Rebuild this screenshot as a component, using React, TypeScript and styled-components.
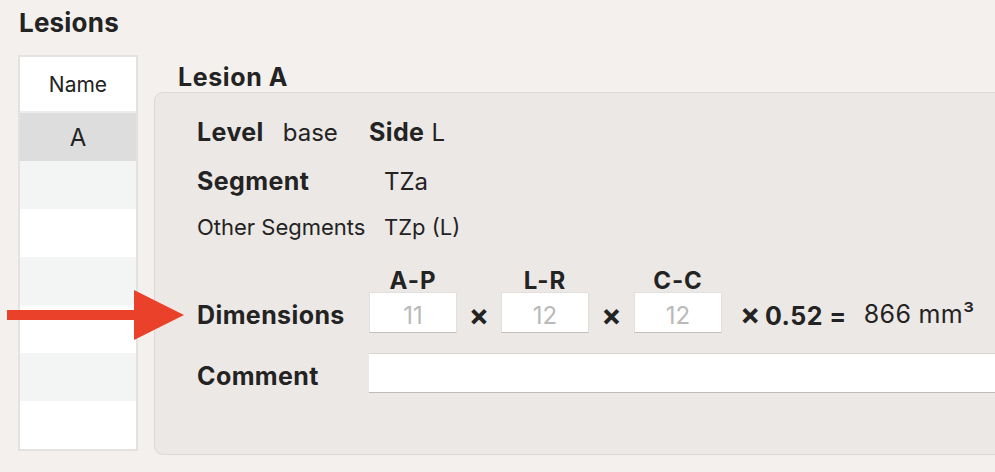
import React from "react";
import styled, { createGlobalStyle } from "styled-components";

const GlobalStyle = createGlobalStyle`
  html, body {
    margin: 0;
    padding: 0;
    background: #f4f0ed;
    overflow: hidden;
  }
  body {
    font-family: Inter, "Noto Sans", sans-serif;
    color: #232323;
  }
`;

const Page = styled.div`
  position: relative;
  width: 995px;
  height: 472px;
  overflow: hidden;
  padding: 7px 0 0 18px;
  box-sizing: border-box;
`;

const Title = styled.h1`
  margin: 0 0 16px 1px;
  font-size: 26px;
  line-height: 32px;
  font-weight: 700;
  letter-spacing: 0.2px;
`;

const Body = styled.div`
  display: flex;
  align-items: flex-start;
  gap: 16px;
`;

const List = styled.div`
  flex: none;
  width: 120px;
  border: 2px solid #e4e2e1;
  background: #fff;
  box-sizing: border-box;
`;

const ListHeader = styled.div`
  height: 54px;
  border-bottom: 2px solid #ececec;
  display: flex;
  align-items: center;
  justify-content: center;
  font-size: 21px;
`;

const ListRow = styled.div<{ $tone: "selected" | "stripe" | "plain" }>`
  height: 48px;
  display: flex;
  align-items: center;
  justify-content: center;
  font-size: 24px;
  background: ${(p) =>
    p.$tone === "selected" ? "#dddddd" : p.$tone === "stripe" ? "#f3f4f4" : "#ffffff"};
`;

const Detail = styled.div`
  flex: none;
  width: 860px;
`;

const SubTitle = styled.h2`
  margin: 7px 0 0 24px;
  font-size: 25px;
  line-height: 30px;
  font-weight: 700;
  letter-spacing: 0.6px;
`;

const Panel = styled.div`
  height: 363px;
  box-sizing: border-box;
  border: 1px solid #dcd8d4;
  border-radius: 9px;
  background: #ece8e5;
  padding: 19px 0 0 42px;
`;

const Field = styled.div<{ $h: number; $mt: number }>`
  display: grid;
  grid-template-columns: 172px 1fr;
  align-items: center;
  height: ${(p) => p.$h}px;
  margin-top: ${(p) => p.$mt}px;
`;

const Pair = styled.div<{ $gap: number }>`
  display: flex;
  align-items: baseline;
  gap: ${(p) => p.$gap}px;
`;

const Label = styled.span<{ $small?: boolean; $drop?: number }>`
  font-size: ${(p) => (p.$small ? 22 : 25)}px;
  font-weight: ${(p) => (p.$small ? 400 : 700)};
  letter-spacing: ${(p) => (p.$small ? 0 : 0.4)}px;
  padding-top: ${(p) => p.$drop ?? 0}px;
  white-space: nowrap;
`;

const Value = styled.span<{ $small?: boolean; $inset?: boolean }>`
  font-size: ${(p) => (p.$small ? 22 : 24)}px;
  padding-left: ${(p) => (p.$inset ? 15 : 0)}px;
  white-space: nowrap;
`;

const Dims = styled.div`
  display: flex;
  align-items: center;
`;

const AxisName = styled.span`
  width: 88px;
  text-align: center;
  font-size: 24px;
  font-weight: 700;
  letter-spacing: 1px;
`;

const Spacer = styled.span<{ $w: number }>`
  width: ${(p) => p.$w}px;
  text-align: center;
  font-size: 30px;
  font-weight: 700;
  padding-top: 5px;
`;

const NumBox = styled.input`
  width: 88px;
  height: 41px;
  box-sizing: border-box;
  border: 1px solid #e2dfdc;
  border-bottom-color: #c3c0bd;
  background: #fff;
  padding: 6px 0 0;
  text-align: center;
  font-family: inherit;
  font-size: 24px;
  color: #b9b9b9;
  outline: none;
`;

const Formula = styled.span`
  margin-left: 18px;
  font-size: 25px;
  font-weight: 700;
  letter-spacing: 0.5px;
  white-space: nowrap;
  padding-top: 3px;
`;

const Times = styled.span`
  font-size: 30px;
  margin-right: 4px;
`;

const Volume = styled.span`
  margin-left: 17px;
  font-size: 25px;
  letter-spacing: 0.3px;
  white-space: nowrap;
  padding-top: 3px;
`;

const TextBox = styled.input`
  width: 100%;
  height: 40px;
  box-sizing: border-box;
  border: none;
  border-top: 1px solid #d9d6d3;
  border-bottom: 1px solid #bebbb8;
  background: #fff;
  outline: none;
  font-family: inherit;
  font-size: 24px;
`;

const Arrow = styled.svg`
  position: absolute;
  left: 7px;
  top: 290px;
`;

const tones: Array<"stripe" | "plain"> = ["stripe", "plain", "stripe", "plain", "stripe", "plain"];

export default function App() {
  return (
    <Page>
      <GlobalStyle />
      <Title>Lesions</Title>
      <Body>
        <List>
          <ListHeader>Name</ListHeader>
          <ListRow $tone="selected">A</ListRow>
          {tones.map((t, i) => (
            <ListRow key={i} $tone={t} />
          ))}
        </List>
        <Detail>
          <SubTitle>Lesion A</SubTitle>
          <Panel>
            <Field $h={40} $mt={0}>
              <Pair $gap={19}>
                <Label>Level</Label>
                <Value>base</Value>
              </Pair>
              <Pair $gap={7}>
                <Label>Side</Label>
                <Value>L</Value>
              </Pair>
            </Field>
            <Field $h={40} $mt={9}>
              <Label>Segment</Label>
              <Value $inset>TZa</Value>
            </Field>
            <Field $h={34} $mt={9}>
              <Label $small>Other Segments</Label>
              <Value $small $inset>TZp (L)</Value>
            </Field>
            <Field $h={24} $mt={22}>
              <span />
              <Dims>
                <AxisName>A-P</AxisName>
                <Spacer $w={44} />
                <AxisName>L-R</AxisName>
                <Spacer $w={45} />
                <AxisName>C-C</AxisName>
              </Dims>
            </Field>
            <Field $h={41} $mt={2}>
              <Label $drop={5}>Dimensions</Label>
              <Dims>
                <NumBox defaultValue="11" />
                <Spacer $w={44}>×</Spacer>
                <NumBox defaultValue="12" />
                <Spacer $w={45}>×</Spacer>
                <NumBox defaultValue="12" />
                <Formula>
                  <Times>×</Times>0.52 =
                </Formula>
                <Volume>866 mm³</Volume>
              </Dims>
            </Field>
            <Field $h={40} $mt={20}>
              <Label $drop={5}>Comment</Label>
              <TextBox />
            </Field>
          </Panel>
        </Detail>
      </Body>
      <Arrow width="180" height="52" viewBox="0 0 180 52">
        <rect x="0" y="20" width="128" height="10" fill="#e9412a" />
        <polygon points="127,0 177,25 127,50" fill="#e9412a" />
      </Arrow>
    </Page>
  );
}
